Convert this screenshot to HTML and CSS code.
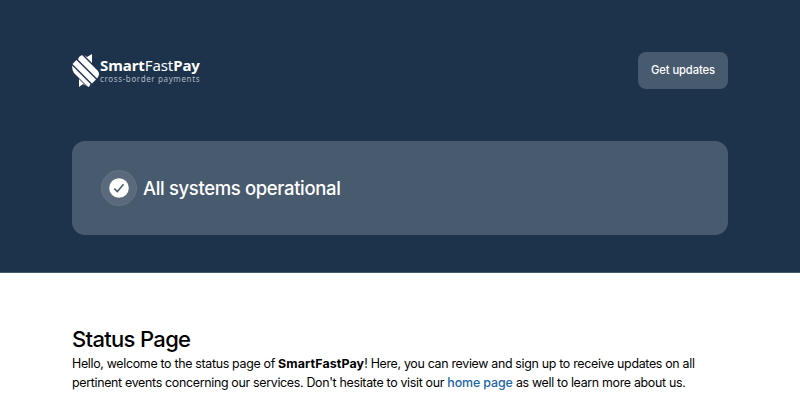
FILE: index.html
```html
<!DOCTYPE html>
<html lang="en">
<head>
  <meta charset="UTF-8" />
  <meta name="viewport" content="width=device-width, initial-scale=1.0" />
  <title>SmartFastPay Status</title>
  <link rel="stylesheet" href="styles.css">
</head>
<body>
  <header class="header">
    <div class="container">
      <div class="header-top">
        <a class="logo" href="#">
          <svg class="logo-mark" viewBox="0 0 28 34" fill="#fff">
            <path d="M7 3 L10 1 L26 17 Q28 20 26 23 L25 24.5 L6 5.5 Z" />
            <path d="M4.5 6 L24 25.5 L20 29.5 L0.5 10 Z" />
            <path d="M0 11.5 L18.5 30 L17 33 L15 32 L2 19 Q0 16 0 11.5 Z" />
            <path d="M12 1 L15 3 L20 0 L20 9 Z" />
            <path d="M7 25 L14 32 L11 30 L7 33 Z" />
          </svg>
          <span class="logo-text">
            <span class="logo-name"><b>Smart</b>Fast<b>Pay</b></span>
            <span class="logo-tagline">cross-border payments</span>
          </span>
        </a>
        <button class="updates-button">Get updates</button>
      </div>
      <div class="status-card">
        <span class="status-icon">
          <svg viewBox="0 0 20 20" width="20" height="20">
            <circle cx="10" cy="10" r="9.8" fill="#fff" />
            <path d="M5.3 10.6 L8.3 13.6 L14.6 6.2" fill="none" stroke="#485a6e" stroke-width="1.5" />
          </svg>
        </span>
        <span class="status-text">All systems operational</span>
      </div>
    </div>
  </header>

  <main class="container content">
    <h1>Status Page</h1>
    <p>Hello, welcome to the status page of <strong>SmartFastPay</strong>! Here, you can review and sign up to receive updates on all pertinent events concerning our services. Don't hesitate to visit our <a href="#">home page</a> as well to learn more about us.</p>
  </main>
</body>
</html>
```
FILE: styles.css
```css
body {
  font-family: Inter, sans-serif;
  background-color: #fff;
  color: #000;
  margin: 0;
}
.container {
  width: 656px;
  margin: 0 auto;
}
.header {
  box-sizing: border-box;
  background-color: #1d334b;
  border-bottom: 1px solid #485a6e;
  height: 273px;
}
.header-top {
  display: flex;
  justify-content: space-between;
  align-items: center;
  padding: 52px 0;
}
.logo {
  display: flex;
  align-items: center;
  color: #fff;
  text-decoration: none;
}
.logo-mark {
  width: 28px;
  height: 34px;
}
.logo-text {
  display: flex;
  flex-direction: column;
  font-family: "Noto Sans", sans-serif;
  white-space: nowrap;
}
.logo-name {
  font-size: 15px;
  line-height: 15px;
  letter-spacing: -0.08px;
}
.logo-tagline {
  font-size: 8px;
  line-height: 11px;
  letter-spacing: 0.63px;
  color: #aeb8c3;
}
.updates-button {
  width: 90px;
  height: 37px;
  padding: 0 0 2px;
  border: 0;
  border-radius: 8px;
  background-color: #485a6e;
  color: #fff;
  font: 500 11.2px Inter, sans-serif;
  letter-spacing: -0.1px;
}
.status-card {
  display: flex;
  align-items: center;
  gap: 6px;
  box-sizing: border-box;
  height: 94px;
  padding: 0 0 1px 29px;
  border-radius: 13px;
  background-color: #485a6e;
}
.status-icon {
  display: flex;
  align-items: center;
  justify-content: center;
  box-sizing: border-box;
  width: 36px;
  height: 36px;
  border: 1px solid #647386;
  border-radius: 50%;
  background-color: #5a697c;
}
.status-text {
  color: #fff;
  font-size: 18.5px;
  font-weight: 500;
  letter-spacing: -0.36px;
}
.content {
  padding-top: 51px;
}
h1 {
  margin: 0;
  font-size: 22px;
  font-weight: 500;
  line-height: 30px;
  letter-spacing: -0.68px;
}
p {
  margin: 0;
  font-size: 12.4px;
  line-height: 19.2px;
  letter-spacing: -0.31px;
}
p strong {
  letter-spacing: 0.13px;
}
p a {
  color: #1b66a8;
  font-weight: 500;
  letter-spacing: -0.1px;
  text-decoration: none;
}
```
